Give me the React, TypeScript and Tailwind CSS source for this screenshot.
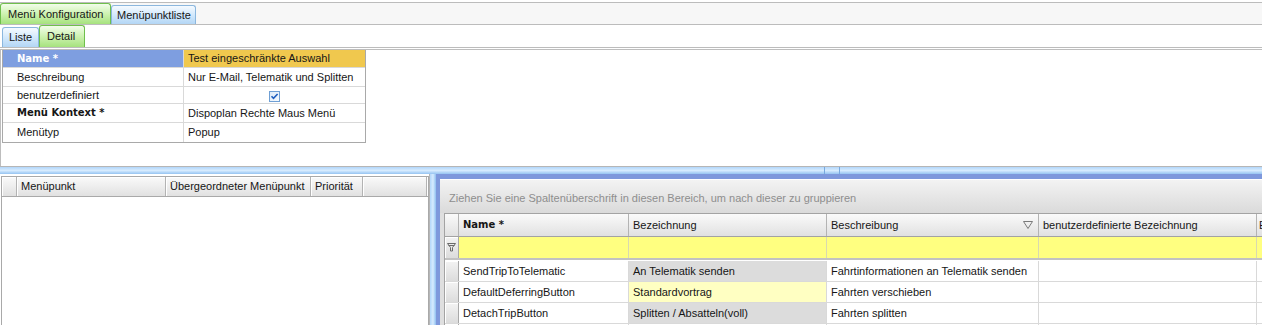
import type { FC, ReactNode } from "react";

const boldFont = "font-['DejaVu_Sans',Verdana,sans-serif] text-[10px] font-bold";

interface TabProps {
  label: string;
  color: "green" | "blue";
  className?: string;
}

const Tab: FC<TabProps> = ({ label, color, className = "" }) => (
  <div
    className={`flex shrink-0 items-center rounded-t-[3px] border border-b-0 ${
      color === "green"
        ? "border-[#6fbf4c] bg-linear-to-b from-[#f2fdea] via-[#cdf2b0] to-[#a6e27e]"
        : "border-[#8bb7de] bg-linear-to-b from-[#f5faff] via-[#d3e9fc] to-[#b3d6f5]"
    } ${className}`}
  >
    {label}
  </div>
);

const Checkbox: FC = () => (
  <svg width="11" height="11" viewBox="0 0 11 11" aria-hidden="true">
    <defs>
      <linearGradient id="cb" x1="0" y1="0" x2="1" y2="1">
        <stop offset="0" stopColor="#dbeaf9" />
        <stop offset="1" stopColor="#f7fbff" />
      </linearGradient>
    </defs>
    <rect x="0.5" y="0.5" width="10" height="10" fill="url(#cb)" stroke="#6f9fd4" />
    <path d="M2.5 5.2 L4.5 7.3 L8.6 3" fill="none" stroke="#1f5fbf" strokeWidth="1.6" />
  </svg>
);

const FunnelIcon: FC = () => (
  <svg width="9" height="9" viewBox="0 0 9 9" aria-hidden="true">
    <path d="M0.5 0.5 H8.5 L5.5 4.5 V8 H3.5 V4.5 Z M1.5 2.5 H7.5" fill="none" stroke="#6a6a6a" />
  </svg>
);

const SortTriangle: FC = () => (
  <svg width="10" height="8" viewBox="0 0 10 8" aria-hidden="true">
    <path d="M0.5 0.5 H9.5 L5 7.5 Z" fill="none" stroke="#7a7a7a" />
  </svg>
);

interface FormRowProps {
  label: string;
  h: string;
  bold?: boolean;
  highlight?: boolean;
  last?: boolean;
  children?: ReactNode;
}

const FormRow: FC<FormRowProps> = ({ label, h, bold, highlight, last, children }) => (
  <div className={`flex ${h} ${last ? "" : "border-b border-[#d9d9d9]"}`}>
    <div
      className={`flex w-[181px] shrink-0 items-center border-r border-[#d9d9d9] pl-[14px] ${
        highlight ? "bg-[#7e9ee0] text-white" : ""
      } ${bold ? boldFont : ""}`}
    >
      {label}
    </div>
    <div className={`flex flex-1 items-center pl-[4px] ${highlight ? "bg-[#f0c84e]" : ""}`}>
      {children}
    </div>
  </div>
);

const leftCols = [
  { w: "w-[15px]", label: "" },
  { w: "w-[149px]", label: "Menüpunkt" },
  { w: "w-[145px]", label: "Übergeordneter Menüpunkt" },
  { w: "w-[52px]", label: "Priorität" },
  { w: "w-[64px]", label: "" },
];

const rightCols = ["w-[14px]", "w-[170px]", "w-[198px]", "w-[212px]", "w-[218px]"];

const rows = [
  {
    name: "SendTripToTelematic",
    bez: "An Telematik senden",
    besch: "Fahrtinformationen an Telematik senden",
    bg: "bg-[#dcdcdc]",
  },
  {
    name: "DefaultDeferringButton",
    bez: "Standardvortrag",
    besch: "Fahrten verschieben",
    bg: "bg-[#ffffc2]",
  },
  {
    name: "DetachTripButton",
    bez: "Splitten / Absatteln(voll)",
    besch: "Fahrten splitten",
    bg: "bg-[#dcdcdc]",
  },
  { name: "", bez: "", besch: "", bg: "" },
];

const selectorCell =
  "w-[14px] shrink-0 border-r border-[#a8a8a8] bg-linear-to-b from-[#f3f3f3] to-[#dcdcdc] shadow-[inset_1px_1px_0_#ffffff]";

const headGradient = "bg-linear-to-b from-[#fafafa] to-[#e1e1e1]";

export default function App() {
  return (
    <div className="h-[325px] w-[1262px] overflow-hidden bg-white font-['Liberation_Sans',Arial,sans-serif] text-[11px] leading-none text-[#161616]">
      {/* main tabs */}
      <div className="mt-[2px] flex h-[23px] items-end border-y border-[#bcbcbc] bg-[#f7f7f7]">
        <Tab label="Menü Konfiguration" color="green" className="h-[21px] w-[111px] pl-[7px]" />
        <Tab label="Menüpunktliste" color="blue" className="h-[19px] w-[85px] pl-[5px]" />
      </div>

      {/* sub tabs */}
      <div className="flex h-[23px] items-end border-b border-[#bcbcbc] pl-[2px]">
        <Tab label="Liste" color="blue" className="h-[20px] w-[37px] pl-[6px]" />
        <Tab label="Detail" color="green" className="h-[22px] w-[46px] pl-[7px]" />
      </div>

      {/* detail form */}
      <div className="h-[118px] pt-[1px]">
        <div className="h-full border-t border-l border-[#bdbdbd]">
          <div className="ml-[1px] w-[364px] border-x border-b border-[#a9a9a9]">
            <FormRow label="Name *" h="h-[18px]" bold highlight>
              Test eingeschränkte Auswahl
            </FormRow>
            <FormRow label="Beschreibung" h="h-[19px]">
              Nur E-Mail, Telematik und Splitten
            </FormRow>
            <FormRow label="benutzerdefiniert" h="h-[17px]">
              <div className="flex flex-1 justify-center pr-[4px] pt-[2px]">
                <Checkbox />
              </div>
            </FormRow>
            <FormRow label="Menü Kontext *" h="h-[19px]" bold>
              Dispoplan Rechte Maus Menü
            </FormRow>
            <FormRow label="Menütyp" h="h-[19px]" last>
              Popup
            </FormRow>
          </div>
        </div>
      </div>

      {/* horizontal splitter */}
      <div className="flex h-[8px] border-t border-[#b6b6b6] bg-linear-to-b from-[#b2d6fa] via-[#d6ebfe] to-[#95c3f1]">
        <div className="ml-[824px] h-full w-[16px] border-x border-[#78a9df]" />
      </div>

      {/* lower area */}
      <div className="flex h-[151px]">
        {/* left grid */}
        <div className="w-[429px] shrink-0 pt-[2px]">
          <div className="ml-[1px] h-full w-[428px] border-x border-t border-[#a9a9a9] bg-white">
            <div className="flex h-[20px] border-b border-[#a9a9a9]">
              {leftCols.map((c, i) => (
                <div
                  key={i}
                  className={`${c.w} flex shrink-0 items-center border-r border-[#b3b3b3] pl-[4px] ${headGradient} shadow-[inset_1px_1px_0_#ffffff]`}
                >
                  {c.label}
                </div>
              ))}
            </div>
          </div>
        </div>

        {/* vertical splitter */}
        <div className="w-[7px] shrink-0 border-l border-[#b6b6b6] bg-linear-to-r from-[#b2d6fa] via-[#d6ebfe] to-[#8fbff0]" />

        {/* right panel */}
        <div className="flex min-w-0 flex-1 flex-col border-t-[5px] border-l-[4px] border-[#7e98dc] bg-[#dfdfdf]">
          <div className="h-[34px] shrink-0 border-t border-white bg-linear-to-b from-[#f3f3f3] to-[#dadada] pl-[9px] pt-[13px] text-[#8e8e8e]">
            Ziehen Sie eine Spaltenüberschrift in diesen Bereich, um nach dieser zu gruppieren
          </div>
          <div className="flex-1 pl-[4px]">
            <div className="h-full overflow-hidden border-t border-l border-[#a3a3a3] bg-white">
              {/* header */}
              <div className="flex h-[23px] border-b border-[#a3a3a3]">
                <div className={`${rightCols[0]} shrink-0 border-r border-[#b3b3b3] ${headGradient}`} />
                <div className={`${rightCols[1]} flex shrink-0 items-center border-r border-[#b3b3b3] pl-[4px] ${headGradient} ${boldFont}`}>
                  Name *
                </div>
                <div className={`${rightCols[2]} flex shrink-0 items-center border-r border-[#b3b3b3] pl-[4px] ${headGradient}`}>
                  Bezeichnung
                </div>
                <div className={`${rightCols[3]} flex shrink-0 items-center justify-between border-r border-[#b3b3b3] pl-[4px] pr-[5px] ${headGradient}`}>
                  <span>Beschreibung</span>
                  <SortTriangle />
                </div>
                <div className={`${rightCols[4]} flex shrink-0 items-center border-r border-[#b3b3b3] pl-[4px] ${headGradient}`}>
                  benutzerdefinierte Bezeichnung
                </div>
                <div className={`flex flex-1 items-center overflow-hidden pl-[2px] ${headGradient}`}>E</div>
              </div>

              {/* filter row */}
              <div className="flex h-[21px] bg-[#ffff80]">
                <div className={`${selectorCell} flex items-center justify-center`}>
                  <FunnelIcon />
                </div>
                {rightCols.slice(1).map((w, i) => (
                  <div key={i} className={`${w} shrink-0 border-r border-[#d9d9b0]`} />
                ))}
                <div className="flex-1" />
              </div>
              <div className="h-[3px] border-t-2 border-[#c2c2c2]" />

              {/* data rows */}
              {rows.map((r, i) => (
                <div key={i} className="flex h-[21px] border-b border-[#d9d9d9]">
                  <div className={selectorCell} />
                  <div className={`${rightCols[1]} flex shrink-0 items-center border-r border-[#d9d9d9] pl-[4px]`}>
                    {r.name}
                  </div>
                  <div className={`${rightCols[2]} flex shrink-0 items-center border-r border-[#d9d9d9] pl-[4px] ${r.bg}`}>
                    {r.bez}
                  </div>
                  <div className={`${rightCols[3]} flex shrink-0 items-center border-r border-[#d9d9d9] pl-[4px]`}>
                    {r.besch}
                  </div>
                  <div className={`${rightCols[4]} shrink-0 border-r border-[#d9d9d9]`} />
                  <div className="flex-1" />
                </div>
              ))}
            </div>
          </div>
        </div>
      </div>
    </div>
  );
}
